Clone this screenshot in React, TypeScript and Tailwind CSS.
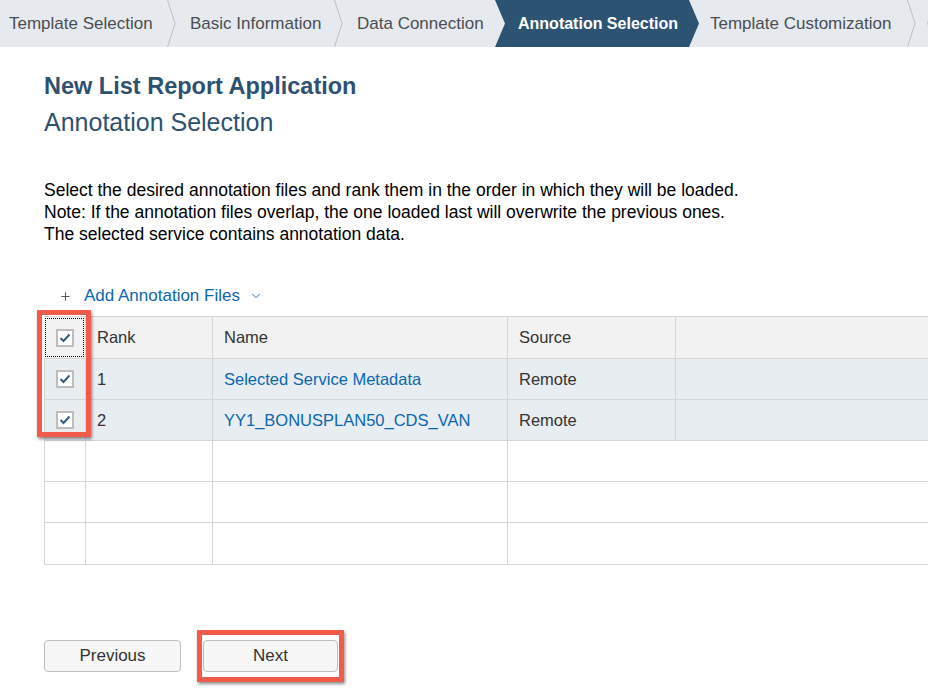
import { Plus, ChevronDown } from "lucide-react";

const steps = [
  { label: "Template Selection", w: "w-[167px]", pl: "pl-[9px]" },
  { label: "Basic Information", w: "w-[158px]", pl: "pl-[14px]" },
  { label: "Data Connection", w: "w-[152px]", pl: "pl-[14px]" },
];

function Chevron() {
  return (
    <svg width="9" height="47" viewBox="0 0 9 47" className="shrink-0">
      <polyline points="0.5,0 8,23.5 0.5,47" fill="none" stroke="#b9c1c9" strokeWidth="1" />
    </svg>
  );
}

function Check() {
  return (
    <div className="flex h-[18px] w-[18px] items-center justify-center border-2 border-[#bdbdbd] bg-white">
      <svg width="12" height="10" viewBox="0 0 12 10">
        <polyline points="1.5,5 4.5,8 10.5,1.5" fill="none" stroke="#335b82" strokeWidth="2" />
      </svg>
    </div>
  );
}

const rows = [
  { rank: "1", name: "Selected Service Metadata", source: "Remote" },
  { rank: "2", name: "YY1_BONUSPLAN50_CDS_VAN", source: "Remote" },
];

const cols = "grid grid-cols-[41px_127px_295px_168px_1fr]";

export default function App() {
  return (
    <div className="h-[690px] w-[928px] overflow-hidden bg-white font-['Liberation_Sans',Arial,sans-serif]">
      {/* wizard steps */}
      <div className="flex h-[47px] items-center bg-[#e6eaef] text-[17px] text-[#4a4e52] whitespace-nowrap">
        {steps.map((s) => (
          <div key={s.label} className="flex h-full shrink-0 items-center">
            <div className={`${s.w} ${s.pl} shrink-0`}>{s.label}</div>
            {s.label !== "Data Connection" && <Chevron />}
          </div>
        ))}
        <div className="flex h-full w-[204px] shrink-0 items-center bg-[#2d5373] pl-[23px] text-[16px] font-bold text-white [clip-path:polygon(0_0,calc(100%-10px)_0,100%_50%,calc(100%-10px)_100%,0_100%,10px_50%)]">
          Annotation Selection
        </div>
        <div className="w-[208px] shrink-0 pl-[11px]">Template Customization</div>
        <Chevron />
        <div className="shrink-0 pl-[11px]">Confirmation</div>
      </div>

      <div className="pl-[44px]">
        <h1 className="mt-[25px] text-[23.5px] leading-[28px] font-bold text-[#2f5170]">New List Report Application</h1>
        <h2 className="mt-[7px] text-[25px] leading-[30px] text-[#2f5170]">Annotation Selection</h2>

        <div className="mt-[42px] text-[17.5px] leading-[22px] text-black">
          <p>Select the desired annotation files and rank them in the order in which they will be loaded.</p>
          <p>Note: If the annotation files overlap, the one loaded last will overwrite the previous ones.</p>
          <p>The selected service contains annotation data.</p>
        </div>

        <div className="mt-[35px] flex h-[32px] items-center text-[17px]">
          <Plus className="ml-[15px] h-[13px] w-[13px] text-[#333]" strokeWidth={1.5} />
          <span className="ml-[12px] text-[#0a67ae]">Add Annotation Files</span>
          <ChevronDown className="ml-[9px] h-[14px] w-[14px] text-[#0a67ae]" strokeWidth={1.5} />
        </div>

        {/* table */}
        <div className="relative mt-[4px] text-[16.5px] text-[#333]">
          <div className={`${cols} h-[43px] border-t border-b border-[#d6d6d6] bg-[#f2f2f2]`}>
            <div className="m-px flex items-center justify-center border border-dotted border-black">
              <Check />
            </div>
            <div className="flex items-center border-l border-[#d6d6d6] pl-[11px]">Rank</div>
            <div className="flex items-center border-l border-[#d6d6d6] pl-[11px]">Name</div>
            <div className="flex items-center border-l border-[#d6d6d6] pl-[11px]">Source</div>
            <div className="border-l border-[#d6d6d6]"></div>
          </div>
          {rows.map((r) => (
            <div key={r.rank} className={`${cols} h-[41px] border-b border-[#d6d6d6] bg-[#e8edf2]`}>
              <div className="flex items-center justify-center border-l border-[#d6d6d6]">
                <Check />
              </div>
              <div className="flex items-center border-l border-[#d6d6d6] pl-[11px]">{r.rank}</div>
              <div className="flex items-center border-l border-[#d6d6d6] pl-[11px] text-[#0a67ae]">{r.name}</div>
              <div className="flex items-center border-l border-[#d6d6d6] pl-[11px]">{r.source}</div>
              <div className="border-l border-[#d6d6d6]"></div>
            </div>
          ))}
          {[0, 1, 2].map((i) => (
            <div key={i} className={`${cols} ${i === 2 ? "h-[42px]" : "h-[41px]"} border-b border-[#d6d6d6]`}>
              <div className="border-l border-[#d6d6d6]"></div>
              <div className="border-l border-[#d6d6d6]"></div>
              <div className="border-l border-[#d6d6d6]"></div>
              <div className="border-l border-[#d6d6d6]"></div>
              <div></div>
            </div>
          ))}

          {/* highlight */}
          <div className="absolute top-[-6px] left-[-7px] h-[127px] w-[54px] border-[5px] border-[#f25a4b] shadow-[1px_2px_3px_rgba(0,0,0,0.45)]"></div>
        </div>

        {/* buttons */}
        <div className="mt-[65px] flex items-center">
          <button className="h-[32px] w-[137px] rounded-[4px] border border-[#bfbfbf] bg-[#f7f7f7] text-[17px] text-[#333]">
            Previous
          </button>
          <div className="ml-[16px] border-[5px] border-[#f25a4b] px-px py-[5px] shadow-[1px_2px_3px_rgba(0,0,0,0.45)]">
            <button className="h-[32px] w-[135px] rounded-[4px] border border-[#bfbfbf] bg-[#f7f7f7] text-[17px] text-[#333]">
              Next
            </button>
          </div>
        </div>
      </div>
    </div>
  );
}
